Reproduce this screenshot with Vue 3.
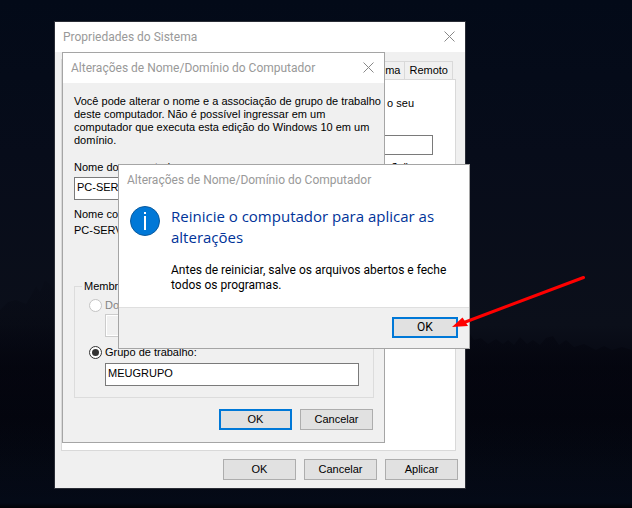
<script setup>
import { ref } from 'vue'

const tabs = ['Nome do Computador', 'Hardware', 'Avançado', 'Proteção do Sistema', 'Remoto']
const description = ref('')
const computerName = ref('PC-SERVIDOR')
const membership = ref('workgroup')
const domain = ref('')
const workgroup = ref('MEUGRUPO')
</script>

<template>
  <main class="desktop">
    <svg class="shore" viewBox="0 0 632 230" preserveAspectRatio="none" aria-hidden="true">
      <defs>
        <linearGradient id="trees" x1="0" y1="0" x2="0" y2="1">
          <stop offset="0" stop-color="#03040d" stop-opacity="0.1" />
          <stop offset="0.4" stop-color="#03040d" stop-opacity="0.6" />
          <stop offset="0.65" stop-color="#03040d" stop-opacity="0.4" />
          <stop offset="1" stop-color="#03040d" stop-opacity="0" />
        </linearGradient>
      </defs>
      <path
        fill="url(#trees)"
        d="M0 32L8 24L16 22L26 26L32 16L36 8L40 14L45 2L50 6L54 12L62 40L466 62L470 56L474 62L481 60L488 66L496 61L503 66L508 62L514 67L520 59L527 66L533 62L540 67L546 60L553 58L559 67L566 62L574 69L584 66L596 72L604 68L612 72L622 69L632 72V230H0Z"
      />
    </svg>

    <section class="window properties" aria-label="Propriedades do Sistema">
      <header class="titlebar">
        <h2>Propriedades do Sistema</h2>
        <button class="close" type="button" aria-label="Fechar">
          <svg viewBox="0 0 11 11"><path d="M.5 .5l10 10M10.500 .5l-10 10" /></svg>
        </button>
      </header>
      <nav class="tabs">
        <button v-for="(tab, i) in tabs" :key="tab" type="button" :class="{ selected: i === 0 }">{{ tab }}</button>
      </nav>
      <div class="panel">
        <p class="intro">O Windows usa as informações a seguir para identificar o seu<br />computador na rede.</p>
        <div class="description">
          <label for="description">Descrição do computador:</label>
          <input id="description" v-model="description" type="text" />
        </div>
        <p class="example">Por exemplo: "Computador da Produção"</p>
      </div>
      <footer class="actions">
        <button type="button">OK</button>
        <button type="button">Cancelar</button>
        <button type="button">Aplicar</button>
      </footer>
    </section>

    <section class="window rename" aria-label="Alterações de Nome/Domínio do Computador">
      <header class="titlebar">
        <h2>Alterações de Nome/Domínio do Computador</h2>
        <button class="close" type="button" aria-label="Fechar">
          <svg viewBox="0 0 11 11"><path d="M.5 .5l10 10M10.500 .5l-10 10" /></svg>
        </button>
      </header>
      <div class="form">
        <p class="lead">Você pode alterar o nome e a associação de grupo de trabalho<br />deste computador. Não é possível ingressar em um<br />computador que executa esta edição do Windows 10 em um<br />domínio.</p>
        <label class="name-label" for="computer-name">Nome do computador:</label>
        <input id="computer-name" v-model="computerName" type="text" />
        <p class="full-name">Nome completo do computador:</p>
        <p class="full-value">PC-SERVIDOR</p>
        <fieldset>
          <legend>Membro de</legend>
          <label class="option muted">
            <input v-model="membership" type="radio" name="membership" value="domain" disabled />Domínio:
          </label>
          <input v-model="domain" type="text" aria-label="Domínio" disabled />
          <label class="option second">
            <input v-model="membership" type="radio" name="membership" value="workgroup" />Grupo de trabalho:
          </label>
          <input v-model="workgroup" type="text" aria-label="Grupo de trabalho" />
        </fieldset>
      </div>
      <footer class="actions">
        <button class="primary" type="button">OK</button>
        <button type="button">Cancelar</button>
      </footer>
    </section>

    <section class="window message" role="alertdialog" aria-label="Alterações de Nome/Domínio do Computador">
      <header class="titlebar">
        <h2>Alterações de Nome/Domínio do Computador</h2>
      </header>
      <div class="notice">
        <svg class="info" viewBox="0 0 30 30" aria-hidden="true">
          <circle cx="15" cy="15" r="14.500" fill="#0078d7" stroke="#0a5a9e" />
          <path d="M14 6h2v2h-2zM14 10h2v14h-2z" fill="#fff" />
        </svg>
        <div>
          <h1>Reinicie o computador para aplicar as alterações</h1>
          <p>Antes de reiniciar, salve os arquivos abertos e feche todos os programas.</p>
        </div>
      </div>
      <footer class="actions">
        <button class="primary" type="button">OK</button>
      </footer>
    </section>

    <svg class="arrow" viewBox="0 0 136 56" aria-hidden="true">
      <path d="M131.500 3.500L12 48.500" stroke="#fe0000" stroke-width="3" stroke-linecap="round" />
      <path d="M0 53L10.500 43.500L12.500 46.500L16 52Z" fill="#fe0000" />
    </svg>
  </main>
</template>

<style>
body {
  margin: 0;
  background: #040a18;
}
</style>

<style scoped>
* {
  box-sizing: border-box;
}
.desktop {
  position: relative;
  min-height: 100vh;
  overflow: hidden;
  background: linear-gradient(#030a18 0%, #070c1a 30%, #0b0f1a 64%, #060812 72%, #04060f 82%, #050a15 92%, #040a17 99%, #010206 100%);
  color: #000;
  font: 11px/13px "Liberation Sans", Arial, sans-serif;
}
.shore {
  position: absolute;
  left: 0;
  bottom: 0;
  width: 100%;
  height: 230px;
}
h1, h2, p, fieldset {
  margin: 0;
  font-weight: 400;
}
button, input {
  font: inherit;
  color: inherit;
}
.window {
  position: absolute;
  display: flex;
  flex-direction: column;
  border: 1px solid #a5a5a5;
  background: #f0f0f0;
}
.properties {
  left: 54px;
  top: 21px;
  width: 412px;
  height: 468px;
  border-color: #2a2d36;
}
.rename {
  left: 62px;
  top: 52px;
  width: 323px;
  height: 391px;
}
.message {
  left: 118px;
  top: 164px;
  width: 352px;
  height: 185px;
}
.titlebar {
  display: flex;
  flex: none;
  align-items: center;
  justify-content: space-between;
  height: 30px;
  padding: 0 10px 0 8px;
  background: #fff;
}
.titlebar h2 {
  color: #999;
  font: 12px/16px Roboto, "Noto Sans", sans-serif;
}
.close {
  display: flex;
  padding: 0 0 2px;
  border: 0;
  background: none;
}
.close svg {
  width: 11px;
  height: 11px;
  fill: none;
  stroke: #888;
}
.tabs {
  display: flex;
  flex: none;
  align-items: flex-end;
  justify-content: flex-end;
  height: 27px;
  margin: 0 12px 0 6px;
}
.tabs button {
  flex: none;
  height: 18px;
  padding: 0 4px;
  border: 1px solid #d9d9d9;
  border-width: 1px 0 0 1px;
  background: #f0f0f0;
  line-height: 17px;
}
.tabs button:last-child {
  border-right-width: 1px;
}
.tabs .selected {
  flex: 1;
  height: 20px;
  background: #fff;
}
.panel {
  flex: 1;
  margin: 0 9px 0 6px;
  padding: 17px 22px 0 12px;
  border: 1px solid #d9d9d9;
  background: #fff;
}
.intro {
  padding-left: 38px;
  white-space: nowrap;
}
.description {
  display: flex;
  align-items: center;
  gap: 8px;
  margin-top: 12px;
}
.description label {
  flex: none;
}
.description input {
  flex: 1;
  min-width: 0;
  height: 20px;
}
.example {
  margin-top: 6px;
  padding-left: 132px;
  white-space: nowrap;
}
input[type='text'] {
  padding: 0 2px 3px;
  border: 1px solid #7a7a7a;
  border-radius: 0;
  background: #fff;
}
input[type='text']:disabled {
  border-color: #ccc;
  background: #f0f0f0;
  box-shadow: inset 0 0 0 1px #fff;
}
.actions {
  display: flex;
  flex: none;
  justify-content: flex-end;
  gap: 8px;
  padding: 8px 7px;
}
.actions button {
  width: 73px;
  height: 21px;
  padding: 0;
  border: 1px solid #adadad;
  background: #e1e1e1;
}
.actions .primary {
  border: 2px solid #0078d7;
}
.rename .actions {
  padding: 11px 11px 12px;
}
.form {
  display: flex;
  flex: 1;
  flex-direction: column;
  padding: 12px 10px 0 11px;
}
.lead {
  white-space: nowrap;
}
.form input[type='text'] {
  flex: none;
  height: 23px;
}
.name-label {
  margin: 14px 0 3px;
}
.full-name {
  margin-top: 8px;
}
.full-value {
  margin-top: 3px;
}
fieldset {
  display: flex;
  flex-direction: column;
  margin-top: auto;
  padding: 6px 14px 11px;
  border: 1px solid #dcdcdc;
}
legend {
  margin-left: -7px;
  padding: 0 2px;
}
.option {
  display: flex;
  align-items: center;
  gap: 3px;
  height: 13px;
  margin-bottom: 2px;
}
.option.second {
  margin: 9px 0 4px;
}
fieldset > input[type='text'] {
  margin-left: 16px;
}
.muted {
  color: #838383;
}
input[type='radio'] {
  display: grid;
  place-content: center;
  appearance: none;
  width: 13px;
  height: 13px;
  margin: 0;
  border: 1px solid #333;
  border-radius: 50%;
  background: #fff;
}
input[type='radio']:checked::before {
  content: '';
  width: 7px;
  height: 7px;
  border-radius: 50%;
  background: #333;
}
input[type='radio']:disabled {
  border-color: #c4c4c4;
}
.notice {
  display: flex;
  flex: 1;
  gap: 11px;
  padding: 11px 20px 0 11px;
  background: #fff;
  font: 12px/15px Roboto, "Noto Sans", sans-serif;
}
.info {
  flex: none;
  width: 30px;
  height: 30px;
}
.notice h1 {
  margin-bottom: 15px;
  color: #003399;
  font: 15px/21px "Open Sans", "Noto Sans", sans-serif;
}
.message .actions {
  padding: 9px 11px 10px;
  border-top: 1px solid #dfdfdf;
}
.message .actions button {
  width: 66px;
  font: 12px/15px Roboto, "Noto Sans", sans-serif;
}
.arrow {
  position: absolute;
  left: 452px;
  top: 274px;
  width: 136px;
  height: 56px;
  fill: none;
  pointer-events: none;
}
</style>
